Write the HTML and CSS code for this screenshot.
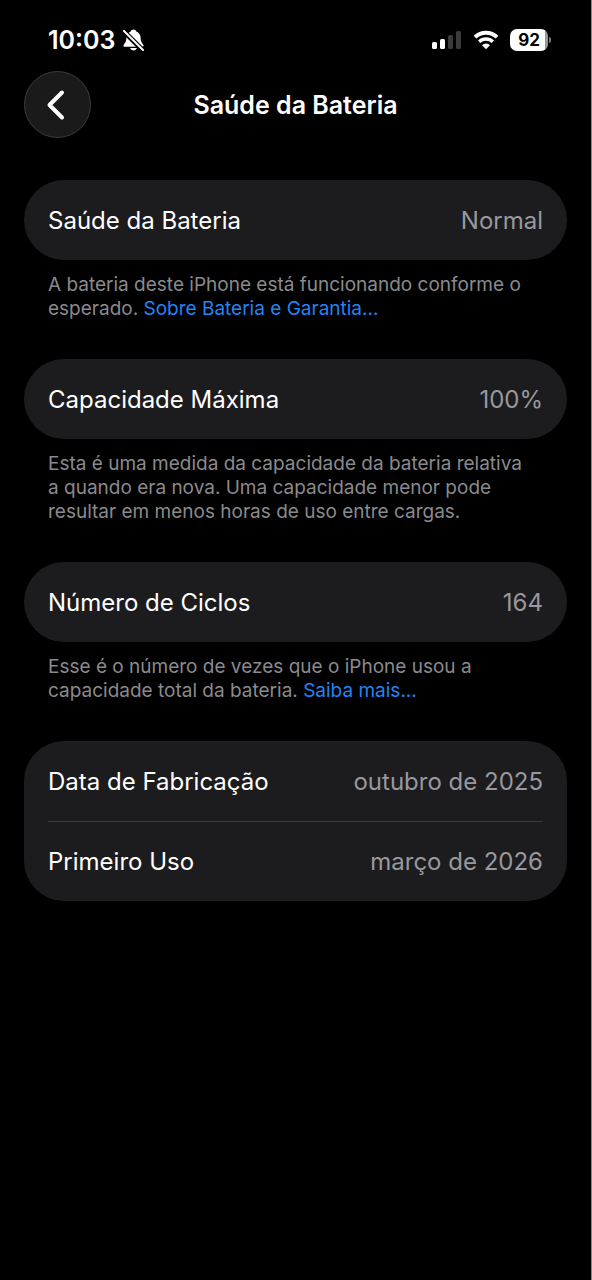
FILE: index.html
```html
<!DOCTYPE html>
<html lang="pt-BR">
<head>
    <meta charset="UTF-8">
    <meta name="viewport" content="width=device-width, initial-scale=1.0">
    <title>Saúde da Bateria</title>
    <link rel="stylesheet" href="styles.css">
</head>
<body>

    <!-- Status bar -->
    <div class="status-bar">
        <div class="status-left">
            <span class="time">10:03</span>
            <svg class="bell" width="22" height="24" viewBox="0 0 22 24" aria-hidden="true">
                <path d="M10.500 1.500c-1.500 0-2.500.8-2.800 1.900C5 4.500 3.500 6.700 3.400 9.500c-.1 3.800-.9 5.100-2.500 6.900-.8 1-.5 2.400.8 2.400h17.600c1.300 0 1.600-1.400.8-2.400-1.600-1.800-2.400-3.100-2.500-6.900-.1-2.800-1.600-5-4.300-6.100-.3-1.100-1.300-1.900-2.800-1.900z" fill="#fff"/>
                <path d="M7.200 20h6.600c-.4 1.600-1.600 2.500-3.300 2.500s-2.900-.9-3.300-2.500z" fill="#fff"/>
                <path d="M-1 1.500L21 23.500" stroke="#000" stroke-width="5"/>
                <path d="M1 3L20 22" stroke="#fff" stroke-width="2" stroke-linecap="round"/>
            </svg>
        </div>
        <div class="status-right">
            <svg width="30" height="20" viewBox="0 0 30 20" aria-hidden="true">
                <rect x="0" y="12" width="5" height="7" rx="1.500" fill="#fff"/>
                <rect x="8" y="9" width="5" height="10" rx="1.500" fill="#fff"/>
                <rect x="16" y="5" width="5" height="14" rx="1.500" fill="#3a3a3a"/>
                <rect x="24" y="1" width="5" height="18" rx="1.500" fill="#3a3a3a"/>
            </svg>
            <svg width="26" height="20" viewBox="0 0 26 20" aria-hidden="true">
                <path d="M2 7.200a15.800 15.800 0 0 1 22 0" fill="none" stroke="#fff" stroke-width="3.800"/>
                <path d="M6.200 11.700a9.800 9.800 0 0 1 13.600 0" fill="none" stroke="#fff" stroke-width="3.400"/>
                <path d="M13 19.300l-4-4.100a5.800 5.800 0 0 1 8 0z" fill="#fff"/>
            </svg>
            <div class="battery">
                <span class="battery-level">92</span>
                <span class="battery-tip"></span>
            </div>
        </div>
    </div>

    <!-- Navigation -->
    <header class="nav">
        <button class="back-btn" type="button" aria-label="Voltar">
            <svg width="20" height="32" viewBox="0 0 20 32" aria-hidden="true">
                <path d="M16 3.500L3.500 16L16 28.500" fill="none" stroke="#fff" stroke-width="4" stroke-linecap="round" stroke-linejoin="round"/>
            </svg>
        </button>
        <h1>Saúde da Bateria</h1>
    </header>

    <!-- Main content -->
    <main class="content">
        <section>
            <dl class="card">
                <div class="row"><dt>Saúde da Bateria</dt><dd>Normal</dd></div>
            </dl>
            <p class="note">A bateria deste iPhone está funcionando conforme o esperado. <a href="#">Sobre Bateria e Garantia...</a></p>
        </section>

        <section>
            <dl class="card">
                <div class="row"><dt>Capacidade Máxima</dt><dd>100%</dd></div>
            </dl>
            <p class="note">Esta é uma medida da capacidade da bateria relativa a quando era nova. Uma capacidade menor pode resultar em menos horas de uso entre cargas.</p>
        </section>

        <section>
            <dl class="card">
                <div class="row"><dt>Número de Ciclos</dt><dd>164</dd></div>
            </dl>
            <p class="note">Esse é o número de vezes que o iPhone usou a capacidade total da bateria. <a href="#">Saiba mais...</a></p>
        </section>

        <section>
            <dl class="card">
                <div class="row"><dt>Data de Fabricação</dt><dd>outubro de 2025</dd></div>
                <div class="row"><dt>Primeiro Uso</dt><dd>março de 2026</dd></div>
            </dl>
        </section>
    </main>

</body>
</html>
```
FILE: styles.css
```css
* {
    box-sizing: border-box;
}

body {
    font-family: Inter, "Liberation Sans", sans-serif;
    margin: 0;
    min-height: 100vh;
    background-color: #000;
    color: #fff;
    border-right: 1px solid #8a8a8a;
}

/* Status bar */
.status-bar {
    display: flex;
    justify-content: space-between;
    align-items: center;
    padding: 24px 40px 0 48px;
}

.status-left,
.status-right {
    display: flex;
    align-items: center;
    height: 32px;
}

.status-left {
    gap: 8px;
}

.status-right {
    gap: 11px;
}

.time {
    font-size: 25px;
    font-weight: 600;
}

.battery {
    display: flex;
    align-items: center;
    gap: 1px;
}

.battery-level {
    width: 38px;
    height: 22px;
    border-radius: 7px;
    background: linear-gradient(to right, #fff 92%, #999 92%);
    color: #000;
    font-size: 17px;
    font-weight: 700;
    line-height: 22px;
    text-align: center;
}

.battery-tip {
    width: 2px;
    height: 6px;
    border-radius: 0 2px 2px 0;
    background-color: #777;
}

/* Navigation */
.nav {
    display: grid;
    grid-template-columns: 67px 1fr 67px;
    align-items: center;
    padding: 15px 24px 0;
}

.nav h1 {
    margin: 0;
    font-size: 25px;
    font-weight: 600;
    text-align: center;
}

.back-btn {
    display: flex;
    align-items: center;
    justify-content: center;
    width: 67px;
    height: 67px;
    padding: 0 4px 0 0;
    border: 1px solid #3c3c3c;
    border-radius: 50%;
    background-color: #1a1a1a;
    cursor: pointer;
}

/* Cards */
.content {
    display: flex;
    flex-direction: column;
    gap: 38px;
    padding: 42px 24px;
}

.card {
    margin: 0;
    padding: 0 24px;
    border-radius: 40px;
    background-color: #1c1c1e;
}

.row {
    display: flex;
    justify-content: space-between;
    align-items: center;
    height: 80px;
    font-size: 24px;
}

.row + .row {
    border-top: 1px solid #3a3a3c;
}

.row dd {
    margin: 0;
    color: #98989f;
}

.note {
    margin: 0;
    padding: 13px 32px 0 24px;
    color: #8a8a8e;
    font-size: 19px;
    line-height: 24px;
}

.note a {
    color: #2384f5;
    text-decoration: none;
}
```
